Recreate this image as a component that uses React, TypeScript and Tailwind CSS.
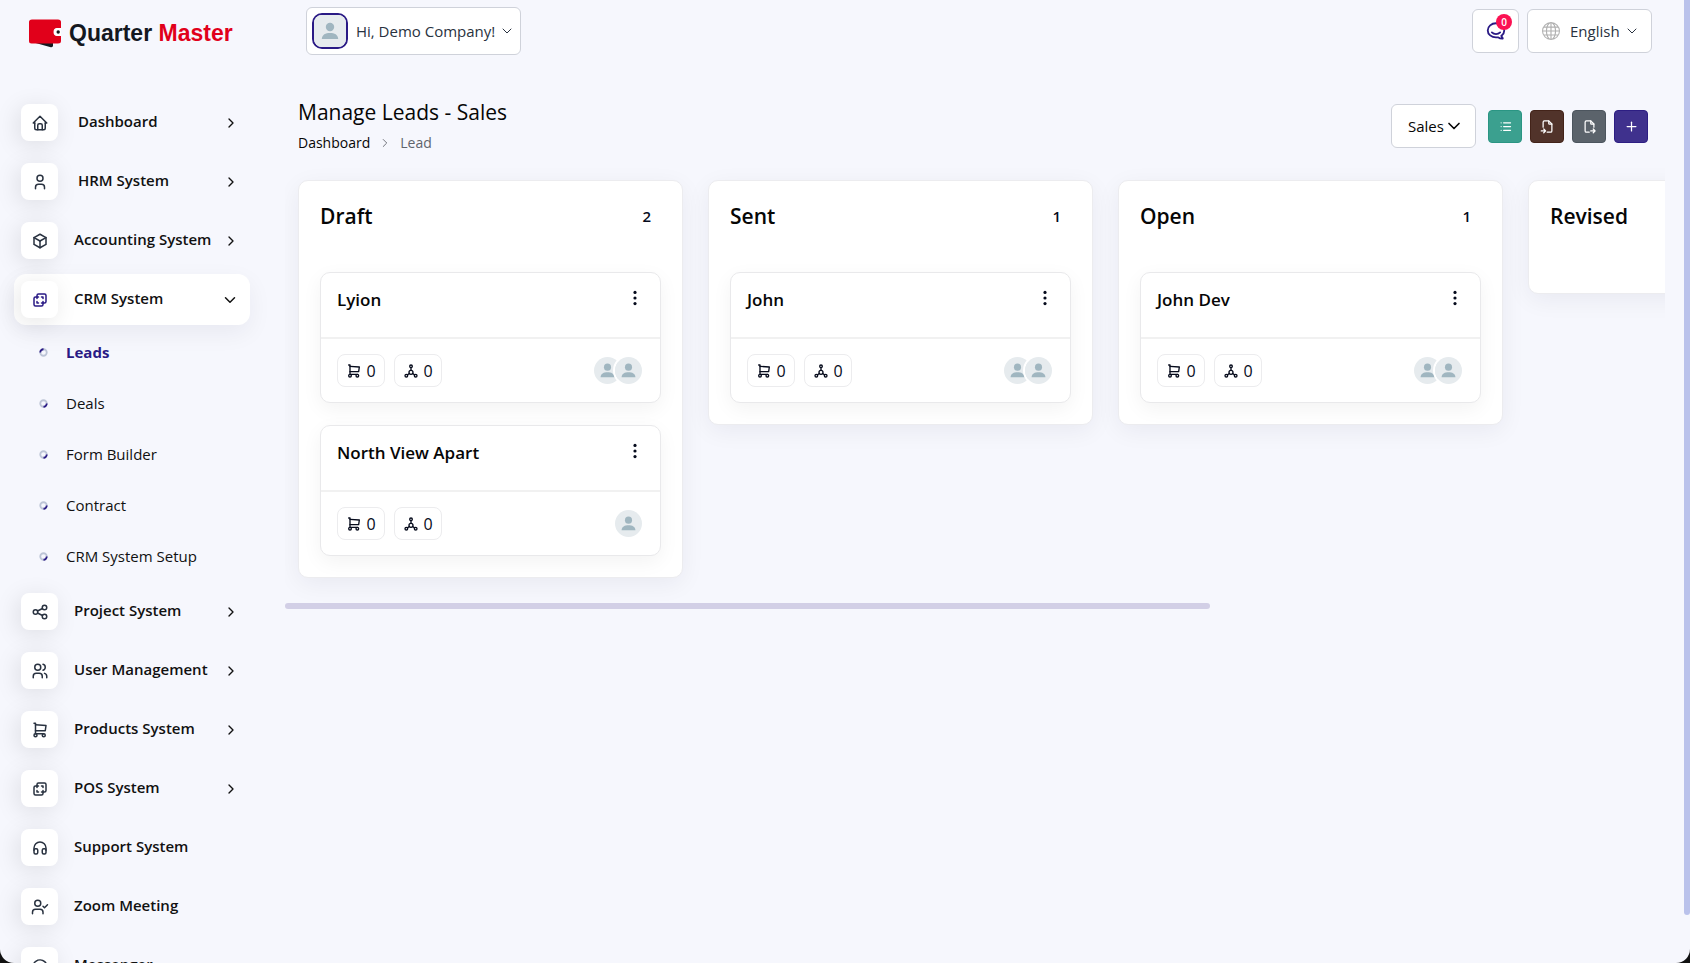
import React, { useState } from "react";
import type { IconType } from "react-icons";
import {
  TbBox,
  TbBrandHipchat,
  TbFileExport,
  TbFileImport,
  TbHeadphones,
  TbHome,
  TbLayersDifference,
  TbList,
  TbMessageCircle,
  TbPlus,
  TbShare,
  TbShoppingCart,
  TbSocial,
  TbUser,
  TbUsers,
} from "react-icons/tb";
import { LuChevronDown, LuChevronRight, LuUserCheck } from "react-icons/lu";
import { BsGlobe } from "react-icons/bs";

type MenuItem = {
  label: string;
  icon: IconType;
  arrow?: boolean;
  indent?: boolean;
  children?: string[];
};

const menu: MenuItem[] = [
  { label: "Dashboard", icon: TbHome, arrow: true, indent: true },
  { label: "HRM System", icon: TbUser, arrow: true, indent: true },
  { label: "Accounting System", icon: TbBox, arrow: true },
  {
    label: "CRM System",
    icon: TbLayersDifference,
    children: ["Leads", "Deals", "Form Builder", "Contract", "CRM System Setup"],
  },
  { label: "Project System", icon: TbShare, arrow: true },
  { label: "User Management", icon: TbUsers, arrow: true },
  { label: "Products System", icon: TbShoppingCart, arrow: true },
  { label: "POS System", icon: TbLayersDifference, arrow: true },
  { label: "Support System", icon: TbHeadphones },
  { label: "Zoom Meeting", icon: LuUserCheck },
  { label: "Messenger", icon: TbMessageCircle },
];

type Lead = { name: string; users: number };

const stages: { name: string; leads: Lead[] }[] = [
  {
    name: "Draft",
    leads: [
      { name: "Lyion", users: 2 },
      { name: "North View Apart", users: 1 },
    ],
  },
  { name: "Sent", leads: [{ name: "John", users: 2 }] },
  { name: "Open", leads: [{ name: "John Dev", users: 2 }] },
  { name: "Revised", leads: [] },
];

const actions = [
  { label: "List view", icon: TbList, color: "bg-[#3ba08f] border-[#2a9583]" },
  { label: "Import", icon: TbFileImport, color: "bg-[#51332a] border-[#432319]" },
  { label: "Export", icon: TbFileExport, color: "bg-[#5b636b] border-[#4c555e]" },
  { label: "Create", icon: TbPlus, color: "bg-[#3f318d] border-[#2d1e83]" },
];

function Logo() {
  return (
    <a href="#" className="flex items-center gap-2 pl-[29px]">
      <svg viewBox="0 0 32 29" className="h-[29px] w-8 shrink-0" aria-hidden="true">
        <path d="M3 23 L24 23 L24 26.5 Q24 28.6 21.8 28.2 Z" fill="#14181f" />
        <path
          d="M3 .5 H29 Q32 .5 32 3 V9 H28.5 A4 4 0 0 0 28.5 17 H32 V22 Q32 24.5 29 24.5 H2.5 Q0 24.5 0 22 V3 Q0 .5 3 .5Z"
          fill="#e1001a"
        />
        <path d="M32 9 H29 A4 4 0 0 0 29 17 H32Z" fill="#fff" />
        <circle cx="29.2" cy="13" r="1.7" fill="#14181f" />
      </svg>
      <span className="font-['Liberation_Sans',Arial,sans-serif] text-[23px] leading-7 font-bold whitespace-nowrap text-[#14181f]">
        Quarter <span className="text-[#e1001a]">Master</span>
      </span>
    </a>
  );
}

// Three-quarter ring used as bullet in the submenu
function Bullet({ active }: { active: boolean }) {
  return (
    <svg viewBox="0 0 10 10" className="size-[9px] shrink-0" fill="none" strokeWidth="2" aria-hidden="true">
      <circle cx="5" cy="5" r="3.6" stroke="#bcc4d6" />
      <path d={active ? "M1.4 5 A3.6 3.6 0 0 1 5 1.4" : "M8.6 5 A3.6 3.6 0 0 1 5 8.6"} stroke="#2a1a85" />
    </svg>
  );
}

function Avatar({ className }: { className: string }) {
  return (
    <svg viewBox="0 0 32 32" className={className} role="img" aria-label="Avatar">
      <rect width="32" height="32" fill="#e6ebee" />
      <circle cx="16" cy="12" r="4.2" fill="#a0b6c0" />
      <path d="M7.8 24 C8 19.6 11.5 18 16 18 C20.5 18 24 19.6 24.2 24Z" fill="#a0b6c0" />
    </svg>
  );
}

function Sidebar() {
  const [activeSub, setActiveSub] = useState("Leads");

  return (
    <aside className="w-[265px] shrink-0">
      <div className="flex h-[66px] items-center">
        <Logo />
      </div>
      <nav className="mt-[31px] pr-[15px] pl-[14px]">
        <ul className="flex flex-col gap-2">
          {menu.map(({ label, icon: Icon, arrow, indent, children }) => (
            <li key={label}>
              <a
                href="#"
                className={`flex h-[51px] items-center rounded-xl pr-[11px] pl-[7px] text-[15px] font-semibold text-[#111] ${
                  children ? "bg-white shadow-[0_8px_24px_rgba(20,20,50,0.06)]" : ""
                }`}
              >
                <span className="flex size-[37px] shrink-0 items-center justify-center rounded-lg bg-white shadow-[-3px_4px_23px_rgba(0,0,0,0.1)]">
                  <Icon className={`size-[18px] ${children ? "text-[#2a1a85]" : "text-[#293240]"}`} />
                </span>
                <span className={`grow pb-[3px] whitespace-nowrap ${indent ? "pl-5" : "pl-4"}`}>{label}</span>
                {arrow && <LuChevronRight className="size-4 text-[#111]" />}
                {children && <LuChevronDown className="size-[18px] text-[#111]" />}
              </a>
              {children && (
                <ul className="-mb-1 pt-[2px]">
                  {children.map((sub) => (
                    <li key={sub}>
                      <a
                        href="#"
                        onClick={() => setActiveSub(sub)}
                        className={`flex items-center gap-[18px] pl-[25px] text-[15px] leading-[51px] ${
                          activeSub === sub ? "font-bold text-[#2a1a85]" : "text-[#111]"
                        }`}
                      >
                        <Bullet active={activeSub === sub} />
                        {sub}
                      </a>
                    </li>
                  ))}
                </ul>
              )}
            </li>
          ))}
        </ul>
      </nav>
    </aside>
  );
}

function Header() {
  return (
    <header className="flex items-start justify-between pt-[7px] pr-[13px] pl-[21px]">
      <button
        type="button"
        className="flex h-12 items-center rounded-md border border-[#cfd2da] bg-white pr-[5px] pl-[5px] text-[15px] text-[#293240]"
      >
        <Avatar className="size-9 rounded-[10px] border-2 border-[#2a1a85]" />
        <span className="pr-1 pl-2 whitespace-nowrap">Hi, Demo Company!</span>
        <LuChevronDown className="size-4" strokeWidth={1.5} />
      </button>
      <div className="flex gap-2 pt-[2px]">
        <button
          type="button"
          aria-label="Messages"
          className="relative flex h-11 w-[47px] items-center justify-center rounded-md border border-[#cfd2da] bg-white"
        >
          <TbBrandHipchat className="size-[22px] text-[#2a1a85]" />
          <span className="absolute top-1 right-[6px] flex size-4 items-center justify-center rounded-full bg-[#fb1152] text-[10px] font-semibold text-white">
            0
          </span>
        </button>
        <label className="relative flex h-11 items-center">
          <BsGlobe className="absolute left-[15px] size-[18px] text-[#b0b0b0]" />
          <select
            aria-label="Language"
            className="h-full w-[125px] appearance-none rounded-md border border-[#cfd2da] bg-white pl-[42px] text-[15px] text-[#293240]"
          >
            <option>English</option>
          </select>
          <LuChevronDown
            className="pointer-events-none absolute right-3 size-4 text-[#293240]"
            strokeWidth={1.5}
          />
        </label>
      </div>
    </header>
  );
}

function PageTitle() {
  return (
    <div className="flex items-start justify-between pt-[42px] pr-[17px] pl-[13px]">
      <div>
        <h1 className="text-[21px] leading-[30px] font-medium text-[#060606]">Manage Leads - Sales</h1>
        <nav aria-label="Breadcrumb" className="mt-[6px] flex items-center gap-2 text-sm text-[#060606]">
          <a href="#">Dashboard</a>
          <LuChevronRight className="size-[14px] text-[#60646c]" strokeWidth={1.5} />
          <span className="text-[#60646c]">Lead</span>
        </nav>
      </div>
      <div className="flex items-center gap-2 pt-[7px]">
        <label className="relative mr-1 flex h-11 items-center">
          <select
            aria-label="Pipeline"
            className="h-full w-[85px] appearance-none rounded-md border border-[#cfd2da] bg-white pl-4 text-[15px] text-[#060606]"
          >
            <option>Sales</option>
          </select>
          <LuChevronDown className="pointer-events-none absolute right-3 size-5 text-[#060606]" />
        </label>
        {actions.map(({ label, icon: Icon, color }) => (
          <button
            key={label}
            type="button"
            aria-label={label}
            className={`flex h-[33px] w-[34px] items-center justify-center rounded border text-white ${color}`}
          >
            <Icon className="size-[15px]" />
          </button>
        ))}
      </div>
    </div>
  );
}

function Counter({ icon: Icon }: { icon: IconType }) {
  return (
    <li className="flex h-[33px] w-12 items-center justify-center gap-1 rounded-lg border border-[#ececee] text-base text-[#060b1c]">
      <Icon className="size-4" />0
    </li>
  );
}

function LeadCard({ lead }: { lead: Lead }) {
  return (
    <article className="rounded-[10px] border border-[#e9e9eb] bg-white shadow-[0_6px_20px_rgba(0,0,0,0.05)]">
      <div className="flex h-16 items-start justify-between px-4 pt-[15px]">
        <h3 className="text-[17px] leading-6 font-semibold">
          <a href="#">{lead.name}</a>
        </h3>
        <button type="button" aria-label={`Options for ${lead.name}`} className="flex h-5 w-[18px] items-center justify-center">
          <svg viewBox="0 0 4 16" className="h-4 w-1" fill="#060b1c" aria-hidden="true">
            <circle cx="2" cy="2.4" r="1.6" />
            <circle cx="2" cy="8" r="1.6" />
            <circle cx="2" cy="13.6" r="1.6" />
          </svg>
        </button>
      </div>
      <div className="flex items-center justify-between border-t-2 border-[#f1f1f1] px-4 py-[15px]">
        <ul className="flex gap-[9px]">
          <Counter icon={TbShoppingCart} />
          <Counter icon={TbSocial} />
        </ul>
        <div className="flex">
          {Array.from({ length: lead.users }, (_, i) => (
            <Avatar key={i} className="-ml-[10px] size-[31px] rounded-full border-2 border-white" />
          ))}
        </div>
      </div>
    </article>
  );
}

function Board() {
  return (
    <section className="mt-[11px]">
      <div className="overflow-hidden pt-4 pb-[25px] pl-[13px]">
        <div className="flex items-start gap-[25px]">
          {stages.map((stage) => (
            <div
              key={stage.name}
              className="w-[385px] shrink-0 rounded-[10px] border border-[#ececef] bg-white px-[21px] pb-[21px] shadow-[0_6px_24px_rgba(20,20,50,0.06)]"
            >
              <div className="flex h-[91px] items-start justify-between pt-5 pr-[10px]">
                <h2 className="text-[21px] leading-[30px] font-semibold">{stage.name}</h2>
                {stage.leads.length > 0 && (
                  <span className="text-[15px] leading-[30px] font-semibold text-[#060b1c]">{stage.leads.length}</span>
                )}
              </div>
              <div className="flex flex-col gap-[22px]">
                {stage.leads.map((lead) => (
                  <LeadCard key={lead.name} lead={lead} />
                ))}
              </div>
            </div>
          ))}
        </div>
      </div>
      {/* horizontal scroll thumb */}
      <div className="h-[6px] w-[67%] rounded-full bg-[#d2cfe6]" />
    </section>
  );
}

export default function App() {
  return (
    <div className="h-screen bg-[#111] font-['Open_Sans','Noto_Sans',sans-serif] text-[#060606]">
      <div className="flex h-full overflow-hidden rounded-b-[14px] bg-[#f6f7fd]">
        <Sidebar />
        <main className="min-w-0 grow pr-[19px] pl-5">
          <Header />
          <PageTitle />
          <Board />
        </main>
        <div className="h-[95%] w-1.5 shrink-0 rounded-b-full bg-[#bac2eb]" />
      </div>
    </div>
  );
}
